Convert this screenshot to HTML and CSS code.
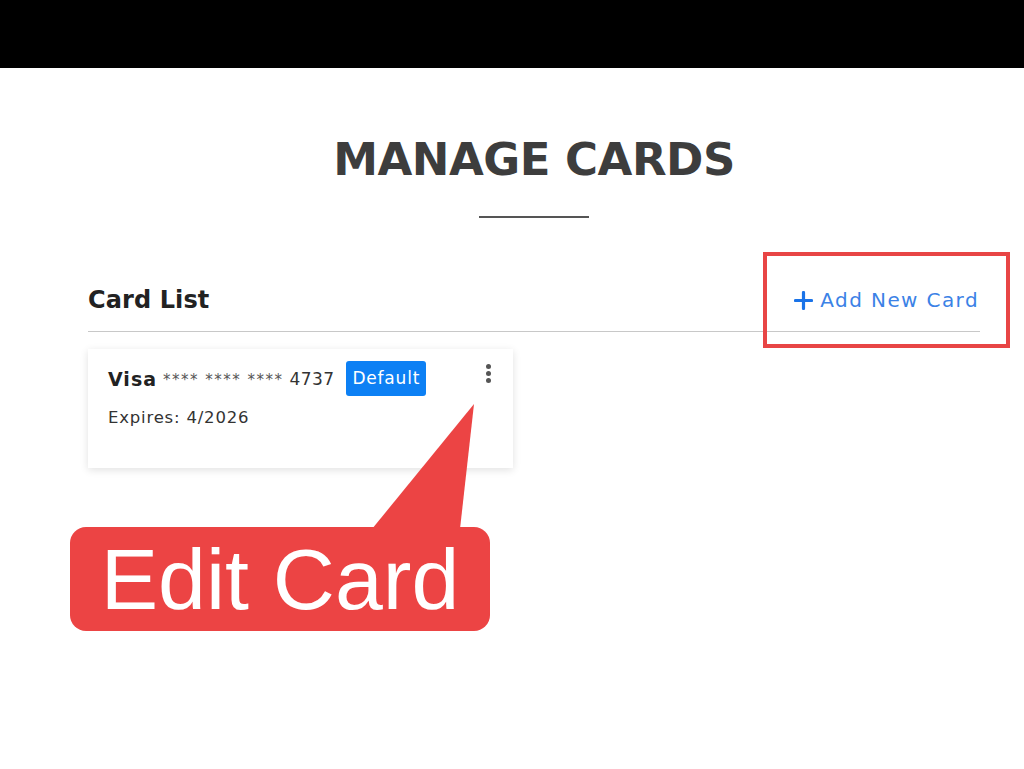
FILE: index.html
```html
<!DOCTYPE html>
<html>
<head>
<meta charset="UTF-8">
<title>Manage Cards</title>
<link rel="stylesheet" href="styles.css">
</head>
<body>
	<div class="topbar"></div>

	<div class="page">
		<div class="title">
			<h1>MANAGE CARDS</h1>
			<div class="rule"></div>
		</div>

		<div class="list-head">
			<h2>Card List</h2>
			<a class="add-card" href="#">
				<svg width="19" height="19" viewBox="0 0 19 19"><path d="M9.5 1.5v16M1.5 9.5h16" stroke="#1a73e8" stroke-width="3.2" stroke-linecap="round"/></svg>
				Add New Card
			</a>
			<div class="mark-box"></div>
		</div>

		<div class="card">
			<div class="card-row">
				<span class="brand">Visa</span>
				<span class="stars">**** **** ****</span>
				<span class="last">4737</span>
				<span class="badge">Default</span>
				<span class="kebab"><i></i><i></i><i></i></span>
			</div>
			<div class="expires">Expires: 4/2026</div>
		</div>
	</div>

	<div class="callout">
		<svg class="pointer" width="120" height="125" viewBox="0 0 120 125"><polygon points="0,125 102,0 88,125" fill="#ec4444"/></svg>
		<div class="callout-box">Edit Card</div>
	</div>
</body>
</html>
```

FILE: styles.css
```css
body {
	margin: 0;
	background-color: #fff;
	font-family: "DejaVu Sans", sans-serif;
	width: 1024px;
	height: 769px;
	overflow: hidden;
	position: relative;
}

.topbar {
	height: 68px;
	background-color: #000;
}

.page {
	width: 892px;
	margin-left: 88px;
}

.title {
	text-align: center;
	padding-top: 64px;
}
.title h1 {
	margin: 0;
	font-weight: bold;
	font-size: 45px;
	line-height: 56px;
	letter-spacing: -0.5px;
	color: #3d3d3d;
}
.rule {
	width: 110px;
	height: 2px;
	background-color: #555;
	margin: 28px auto 0;
}

.list-head {
	position: relative;
	display: flex;
	justify-content: space-between;
	align-items: center;
	margin-top: 66px;
	height: 32px;
	padding-bottom: 15px;
	border-bottom: 1px solid #c8c8c8;
}
.list-head h2 {
	margin: 0;
	font-size: 24px;
	font-weight: bold;
	letter-spacing: 0.1px;
	color: #222;
}
.add-card {
	display: flex;
	align-items: center;
	gap: 7px;
	color: #3b82e6;
	text-decoration: none;
	font-size: 20px;
	letter-spacing: 1.4px;
	margin-right: 1px;
}
.mark-box {
	position: absolute;
	left: 675px;
	top: -32px;
	width: 239px;
	height: 88px;
	border: 4px solid #e84545;
}

.card {
	margin-top: 17px;
	width: 385px;
	height: 82px;
	padding: 12px 20px 25px;
	background-color: #fff;
	box-shadow: 0 2px 8px rgba(0, 0, 0, 0.12);
}
.card-row {
	display: flex;
	align-items: center;
	height: 35px;
}
.brand {
	font-weight: bold;
	font-size: 19px;
	letter-spacing: 1px;
	color: #222;
	margin-right: 6px;
}
.stars {
	font-size: 15px;
	letter-spacing: 1.5px;
	color: #555;
	margin-right: 6px;
	padding-top: 2px;
}
.last {
	font-size: 17px;
	letter-spacing: 0.4px;
	color: #333;
	margin-right: 12px;
}
.badge {
	background-color: #0d80f4;
	color: #fff;
	font-size: 17px;
	letter-spacing: 0.8px;
	line-height: 25px;
	padding: 5px 6px;
	border-radius: 3px;
}
.kebab {
	margin-left: auto;
	margin-right: 2px;
	display: flex;
	flex-direction: column;
	gap: 2px;
	align-self: flex-start;
	padding-top: 3px;
}
.kebab i {
	display: block;
	width: 5px;
	height: 5px;
	border-radius: 50%;
	background-color: #555;
}
.expires {
	margin-top: 12px;
	font-size: 16.5px;
	letter-spacing: 0.8px;
	color: #333;
}

.callout {
	position: absolute;
	left: 70px;
	top: 404px;
}
.pointer {
	position: absolute;
	left: 302px;
	top: 0;
}
.callout-box {
	position: relative;
	margin-top: 123px;
	width: 420px;
	height: 104px;
	border-radius: 16px;
	background-color: #ec4444;
	color: #fff;
	font-family: "Liberation Sans", Arial, sans-serif;
	font-size: 86px;
	line-height: 104px;
	text-align: center;
}
```
